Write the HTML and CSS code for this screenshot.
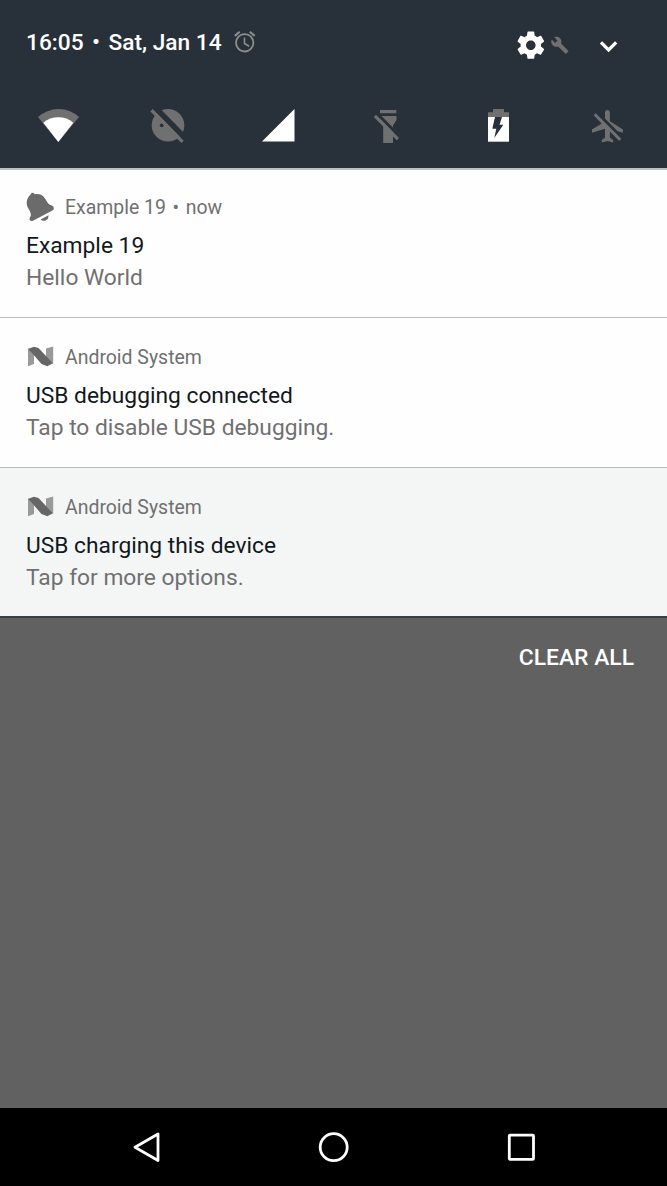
FILE: index.html
```html
<!DOCTYPE html>
<html lang="en">
<head>
<meta charset="utf-8">
<title>Notifications</title>
<link rel="stylesheet" href="styles.css">
</head>
<body>
<div class="screen">
  <header class="shade">
    <div class="status">
      <span class="clock">16:05<span class="dot">•</span>Sat, Jan 14</span>
      <svg class="alarm" viewBox="0 0 24 24"><path d="M22 5.72l-4.6-3.86-1.29 1.53 4.6 3.86L22 5.72zM7.88 3.39L6.6 1.86 2 5.71l1.29 1.53 4.59-3.85zM12.5 8H11v6l4.75 2.85.75-1.23-4-2.37V8zM12 4c-4.97 0-9 4.03-9 9s4.02 9 9 9a9 9 0 0 0 0-18zm0 16.3c-4 0-7.3-3.3-7.3-7.3s3.3-7.3 7.3-7.3 7.3 3.3 7.3 7.3-3.3 7.3-7.3 7.3z"/></svg>
      <svg class="controls" viewBox="510 25 120 40">
        <path class="on" transform="translate(514.5 28.9) scale(1.36)" d="M19.43 12.98c.04-.32.07-.64.07-.98s-.03-.66-.07-.98l2.11-1.65c.19-.15.24-.42.12-.64l-2-3.46c-.12-.22-.39-.3-.61-.22l-2.49 1c-.52-.4-1.08-.73-1.69-.98l-.38-2.65C14.46 2.18 14.25 2 14 2h-4c-.25 0-.46.18-.49.42l-.38 2.65c-.61.25-1.17.59-1.69.98l-2.49-1c-.23-.09-.49 0-.61.22l-2 3.46c-.13.22-.07.49.12.64l2.11 1.65c-.04.32-.07.65-.07.98s.03.66.07.98l-2.11 1.65c-.19.15-.24.42-.12.64l2 3.46c.12.22.39.3.61.22l2.49-1c.52.4 1.08.73 1.69.98l.38 2.65c.03.24.24.42.49.42h4c.25 0 .46-.18.49-.42l.38-2.65c.61-.25 1.17-.59 1.69-.98l2.49 1c.23.09.49 0 .61-.22l2-3.46c.12-.22.07-.49-.12-.64l-2.11-1.65zM12 15.5c-1.93 0-3.5-1.57-3.5-3.5s1.57-3.5 3.5-3.5 3.5 1.57 3.5 3.5-1.57 3.5-3.5 3.5z"/>
        <path class="off" transform="translate(550.5 35.9) scale(.78)" d="M22.7 19l-9.1-9.1c.9-2.3.4-5-1.5-6.9-2-2-5-2.4-7.4-1.3L9 6 6 9 1.6 4.7C.4 7.1.9 10.1 2.9 12.1c1.9 1.9 4.6 2.4 6.9 1.5l9.1 9.1c.4.4 1 .4 1.4 0l2.3-2.3c.5-.4.5-1.1.1-1.4z"/>
        <path class="chevron" d="M601 42.3l7.6 7.6 7.6-7.6"/>
      </svg>
    </div>
    <div class="tiles">
      <svg viewBox="37 105 42 42"><path class="off" d="M38 117Q47 109.3 58.3 109T79 117L58.3 142z"/><path class="on" d="M43.3 122.7Q50 117.3 58.3 117.3T73.3 122.7L58.3 142z"/></svg>
      <svg viewBox="147 105 42 42"><circle class="off" cx="168" cy="125.200" r="16.300"/><circle class="hole" cx="161.700" cy="125.300" r="1.900"/><circle class="hole" cx="173.600" cy="125.300" r="2"/><path class="hole" d="M152.700 109l4-4 31 31.700-4 4z"/><path class="off" d="M152.700 109l31 31.700-2.300 2.400-31-31.700z"/></svg>
      <svg viewBox="257 105 42 42"><path class="on" d="M262 141.500L294.500 109v32.500z"/></svg>
      <svg viewBox="367 105 42 42"><path class="off" d="M380 116h16.300v4l-3.300 5.300V143h-9.800v-18l-3.200-5.300z"/><path class="hole" d="M376 114.700l3.500-3.500 23 23.300-3.500 3.500z"/><path class="off" d="M376 114.700l23 23.300-2.200 2.200-23-23.300zM380 110h16.300v3.300H380zM381.500 116h14.800v4l-3.300 5.300v2.200z"/></svg>
      <svg viewBox="477 105 42 42"><path class="off" d="M493 109h11v3.300h5V118h-21v-5.700h5z"/><path class="on" d="M488 117h21v24.700h-21z"/><path class="hole" d="M495 117h7l-2.500 7.700h3.800l-9 13.300 2-9.200h-4z"/></svg>
      <svg viewBox="587 105 42 42"><path class="off" transform="translate(588.700 106.700) scale(1.63)" d="M13,9V3.500C13,2.670 12.330,2 11.500,2C10.670,2 10,2.670 10,3.500v3.680l7.830,7.830L21,16v-2L13,9zM3,5.270l4.990,4.990L2,14v2l8,-2.500V19l-2,1.500V22l3.500,-1l3.500,1v-1.500L13,19v-3.730L18.730,21 20,19.730 4.270,4z"/></svg>
    </div>
  </header>
  <main>
    <article class="card">
      <div class="source"><svg viewBox="26 192 30 30"><path class="bell" d="M30.800 194.200q.3-1.700 2-1.500 1.500.3 1.700 1.500 7-1.200 10.500 4.200l3.200 5.200q1.300 1.500 3.600 1.900 2.300.8 2 3.200-.2 1.200-1.400 1.800L33 220.800q-2.500.9-3.300-1-.6-1.200.8-3.300 1-2.500-1-6l-2-3.500q-2.700-7.300 3.300-12.800zM40.500 219.500l8-4.200q.3 3.600-2.500 4.900-3 1.300-5.500-.7z"/></svg><span>Example 19<span class="dot">•</span>now</span></div>
      <h2>Example 19</h2>
      <p>Hello World</p>
    </article>
    <article class="card">
      <div class="source"><svg viewBox="26 342 30 30"><path class="n-side" d="M28 348.500l6-1.500v17l-6 2.300zM46 348.500l7.200-2v17.300l-7.200 2z"/><path class="n-bar" d="M28.300 349.300l5.700-2.600 4.500 1.400L52.500 363l-5 3.300-6-2.200L32 353z"/></svg><span>Android System</span></div>
      <h2>USB debugging connected</h2>
      <p>Tap to disable USB debugging.</p>
    </article>
    <article class="card quiet">
      <div class="source"><svg viewBox="26 342 30 30"><path class="n-side" d="M28 348.500l6-1.500v17l-6 2.300zM46 348.500l7.200-2v17.300l-7.200 2z"/><path class="n-bar" d="M28.300 349.300l5.700-2.600 4.500 1.400L52.500 363l-5 3.300-6-2.200L32 353z"/></svg><span>Android System</span></div>
      <h2>USB charging this device</h2>
      <p>Tap for more options.</p>
    </article>
    <div class="clear">CLEAR ALL</div>
  </main>
  <nav class="navbar">
    <svg viewBox="126 1127 40 40"><path d="M158 1134v26.500l-23-13.250z"/></svg>
    <svg viewBox="314 1127 40 40"><circle cx="333.700" cy="1147.200" r="13.500"/></svg>
    <svg viewBox="501 1127 40 40"><rect x="509.300" y="1135.200" width="24.200" height="24.200" rx=".8"/></svg>
  </nav>
</div>
</body>
</html>
```

FILE: styles.css
```css
* { box-sizing: border-box; }
body { margin: 0; background: #616161; font-family: Roboto, sans-serif; }
.screen { width: 667px; height: 1186px; display: flex; flex-direction: column; background: #616161; overflow: hidden; }
svg { display: block; flex: none; }
.on { fill: #fff; }
.off { fill: #707070; }
.hole { fill: #28313a; }
.shade { height: 168px; background: #28313a; flex: none; }
.status { height: 105px; padding: 25px 37px 0 26px; display: flex; align-items: flex-start; }
.clock { font-size: 22.700px; font-weight: 500; line-height: 34px; padding-top: 1px; color: #fff; white-space: nowrap; }
.clock .dot { margin: 0 8.500px; }
.alarm { width: 25.500px; height: 25.500px; margin: 3.500px 0 0 10px; fill: #8e8e8a; }
.controls { width: 120px; height: 40px; margin-left: auto; }
.chevron { fill: none; stroke: #fff; stroke-width: 3.300; }
.tiles { display: grid; grid-template-columns: repeat(6, 110px); justify-items: center; padding-left: 3px; }
.tiles svg { width: 42px; height: 42px; }
main { flex: 1; border-top: 2px solid #bdbfc0; }
.card { height: 150px; padding: 24px 26px 0; background: #fefefe; border-bottom: 1px solid #b9bbbb; }
.card:first-child { height: 148px; padding-top: 22px; }
.card.quiet { height: 150px; padding-top: 24px; background: #f4f6f6; border-bottom: 2px solid #373f44; }
.source { display: flex; align-items: center; gap: 9px; height: 30px; color: #707070; font-size: 19.450px; line-height: 30px; }
.source svg { width: 30px; height: 30px; }
.source > span { padding-top: 2px; }
.source .dot { margin: 0 6.600px; }
.bell { fill: #6b6b6b; }
.n-side { fill: #999; }
.n-bar { fill: #666; }
h2 { margin: 8px 0 0; font-size: 22.780px; font-weight: 400; line-height: 32px; color: #111820; }
p { margin: 0; font-size: 22.780px; line-height: 32px; color: #707070; }
.clear { padding: 24px 33px 0 0; text-align: right; color: #fff; font-size: 22.850px; font-weight: 500; line-height: 32px; }
.navbar { height: 78px; flex: none; background: #000; padding: 19px 126px 0; display: flex; justify-content: space-between; align-items: flex-start; }
.navbar svg { width: 40px; height: 40px; fill: none; stroke: #fff; stroke-width: 2.800; stroke-linejoin: round; }
```
